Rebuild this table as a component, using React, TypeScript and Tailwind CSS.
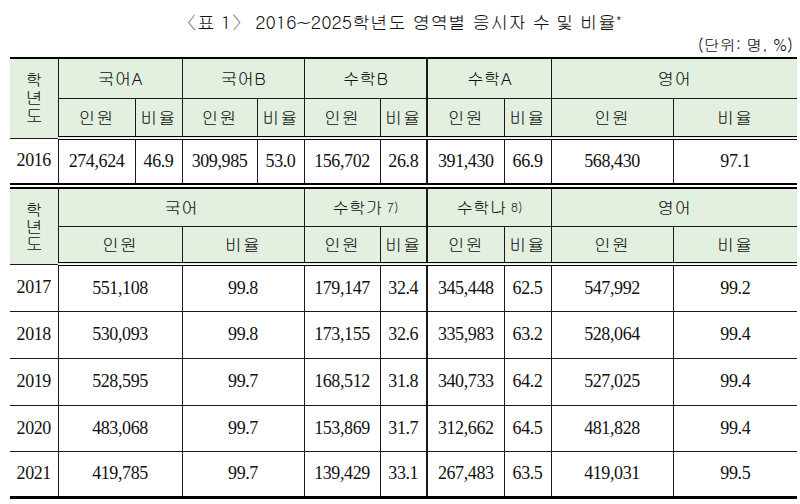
import React from "react";

const kr = "font-['Gulim','Noto_Sans_CJK_KR',sans-serif]";
const num = "font-['Liberation_Serif','Noto_Sans_CJK_KR',serif]";

// header cell / body cell base styles
const th = `bg-[#e3f0e0] border border-[#1a1a1a] p-0 text-center align-middle font-normal text-[17px] text-[#111] ${kr}`;
const td = `border border-[#1a1a1a] p-0 text-center align-middle text-[18px] tracking-[-0.4px] text-[#111] ${num}`;

const Cols = () => (
  <colgroup>
    <col className="w-[48px]" />
    <col className="w-[77px]" />
    <col className="w-[47px]" />
    <col className="w-[75px]" />
    <col className="w-[47px]" />
    <col className="w-[76px]" />
    <col className="w-[47px]" />
    <col className="w-[77px]" />
    <col className="w-[47px]" />
    <col className="w-[122px]" />
    <col className="w-[124px]" />
  </colgroup>
);

// 학년도 stacked top to bottom
const Vertical = ({ gap }: { gap: string }) => (
  <div className="flex justify-center">
    <span className={`[writing-mode:vertical-rl] [text-orientation:upright] leading-[17px] ${gap}`}>학년도</span>
  </div>
);

const Sup = ({ children }: { children: React.ReactNode }) => (
  <span className="relative -top-[2px] ml-[4px] text-[12px]">{children}</span>
);

const first = ["2016", "274,624", "46.9", "309,985", "53.0", "156,702", "26.8", "391,430", "66.9", "568,430", "97.1"];

const rows = [
  ["2017", "551,108", "99.8", "179,147", "32.4", "345,448", "62.5", "547,992", "99.2"],
  ["2018", "530,093", "99.8", "173,155", "32.6", "335,983", "63.2", "528,064", "99.4"],
  ["2019", "528,595", "99.7", "168,512", "31.8", "340,733", "64.2", "527,025", "99.4"],
  ["2020", "483,068", "99.7", "153,869", "31.7", "312,662", "64.5", "481,828", "99.4"],
  ["2021", "419,785", "99.7", "139,429", "33.1", "267,483", "63.5", "419,031", "99.5"],
];

const App = () => {
  return (
    <div className="w-[800px] h-[504px] overflow-hidden bg-white text-[#111]">
      <div className={`pt-[11px] text-center text-[18px] leading-[22px] ${kr}`}>
        〈표 1〉 2016~2025학년도 영역별 응시자 수 및 비율<span className="relative -top-[7px] text-[10px]">*</span>
      </div>
      <div className={`pr-[7px] text-right text-[16px] leading-[18px] ${kr}`}>(단위: 명, %)</div>

      <div className="mt-[3px] pl-[10px] pr-[3px]">
        {/* 2016 */}
        <table className="w-[787px] table-fixed border-collapse border-t-2 border-b-2 border-black">
          <Cols />
          <tbody>
            <tr className="h-[40px]">
              <th rowSpan={2} className={`${th} border-l-0`}>
                <Vertical gap="tracking-[1px]" />
              </th>
              <th colSpan={2} className={th}>국어A</th>
              <th colSpan={2} className={th}>국어B</th>
              <th colSpan={2} className={th}>수학B</th>
              <th colSpan={2} className={`${th} border-l-2`}>수학A</th>
              <th colSpan={2} className={`${th} border-r-0`}>영어</th>
            </tr>
            <tr className="h-[40px]">
              {["인원", "비율", "인원", "비율", "인원", "비율", "인원", "비율", "인원", "비율"].map((t, i) => (
                <th
                  key={i}
                  className={`${th} border-b-4 border-b-black border-double tracking-[1px] ${i === 6 ? "border-l-2" : ""} ${i === 9 ? "border-r-0" : ""}`}
                >
                  {t}
                </th>
              ))}
            </tr>
            <tr className="h-[46px]">
              {first.map((v, i) => (
                <td key={i} className={`${td} ${i === 0 ? "border-l-0" : ""} ${i === 7 ? "border-l-2" : ""} ${i === 10 ? "border-r-0" : ""}`}>
                  {v}
                </td>
              ))}
            </tr>
          </tbody>
        </table>

        {/* 2017 ~ */}
        <table className="mt-[2px] w-[787px] table-fixed border-collapse border-t-2 border-b-[3px] border-black">
          <Cols />
          <tbody>
            <tr className="h-[38px]">
              <th rowSpan={2} className={`${th} border-l-0`}>
                <Vertical gap="tracking-[0px]" />
              </th>
              <th colSpan={4} className={th}>국어</th>
              <th colSpan={2} className={th}>
                수학가<Sup>7)</Sup>
              </th>
              <th colSpan={2} className={`${th} border-l-2`}>
                수학나<Sup>8)</Sup>
              </th>
              <th colSpan={2} className={`${th} border-r-0`}>영어</th>
            </tr>
            <tr className="h-[38px]">
              <th colSpan={2} className={`${th} border-b-4 border-b-black border-double tracking-[1px]`}>인원</th>
              <th colSpan={2} className={`${th} border-b-4 border-b-black border-double tracking-[1px]`}>비율</th>
              <th className={`${th} border-b-4 border-b-black border-double tracking-[1px]`}>인원</th>
              <th className={`${th} border-b-4 border-b-black border-double tracking-[1px]`}>비율</th>
              <th className={`${th} border-b-4 border-b-black border-double border-l-2 tracking-[1px]`}>인원</th>
              <th className={`${th} border-b-4 border-b-black border-double tracking-[1px]`}>비율</th>
              <th className={`${th} border-b-4 border-b-black border-double tracking-[1px]`}>인원</th>
              <th className={`${th} border-b-4 border-b-black border-double border-r-0 tracking-[1px]`}>비율</th>
            </tr>
            {rows.map((r, ri) => (
              <tr key={ri} className={ri < 3 ? "h-[47px]" : "h-[46px]"}>
                <td className={`${td} border-l-0`}>{r[0]}</td>
                <td colSpan={2} className={td}>{r[1]}</td>
                <td colSpan={2} className={td}>{r[2]}</td>
                <td className={td}>{r[3]}</td>
                <td className={td}>{r[4]}</td>
                <td className={`${td} border-l-2`}>{r[5]}</td>
                <td className={td}>{r[6]}</td>
                <td className={td}>{r[7]}</td>
                <td className={`${td} border-r-0`}>{r[8]}</td>
              </tr>
            ))}
          </tbody>
        </table>
      </div>
    </div>
  );
};

export default App;
